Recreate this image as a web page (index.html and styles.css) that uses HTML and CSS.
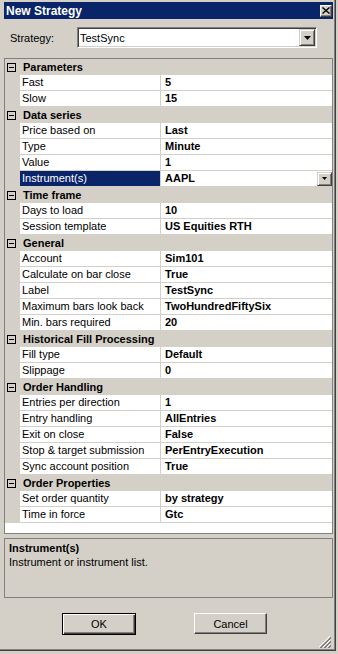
FILE: index.html
```html
<!DOCTYPE html>
<html lang="en">
<head>
    <meta charset="UTF-8">
    <meta name="viewport" content="width=device-width, initial-scale=1.0">
    <title>New Strategy</title>
    <link rel="stylesheet" href="styles.css">
</head>
<body>
    <div class="window">
        <div class="titlebar">
            <span class="title">New Strategy</span>
            <span class="close-btn">
                <svg width="8" height="7" viewBox="0 0 8 7"><path d="M0.5 0.5 L7.5 6.5 M7.5 0.5 L0.5 6.5" stroke="#000" stroke-width="1.4" fill="none"/></svg>
            </span>
        </div>

        <div class="strategy-row">
            <label class="strategy-label">Strategy:</label>
            <div class="combo">
                <span class="combo-text">TestSync</span>
                <span class="combo-btn">
                    <svg width="7" height="4" viewBox="0 0 7 4"><path d="M0 0 H7 L3.5 4 Z" fill="#000"/></svg>
                </span>
            </div>
        </div>

        <div class="prop-grid">
            <div class="category"><span class="toggle"></span>Parameters</div>
            <div class="prop"><span class="gutter"></span><span class="name">Fast</span><span class="value">5</span></div>
            <div class="prop"><span class="gutter"></span><span class="name">Slow</span><span class="value">15</span></div>

            <div class="category"><span class="toggle"></span>Data series</div>
            <div class="prop"><span class="gutter"></span><span class="name">Price based on</span><span class="value">Last</span></div>
            <div class="prop"><span class="gutter"></span><span class="name">Type</span><span class="value">Minute</span></div>
            <div class="prop"><span class="gutter"></span><span class="name">Value</span><span class="value">1</span></div>
            <div class="prop selected">
                <span class="gutter"></span><span class="name">Instrument(s)</span>
                <span class="value">AAPL
                    <span class="cell-btn">
                        <svg width="5" height="3" viewBox="0 0 5 3"><path d="M0 0 H5 L2.5 3 Z" fill="#000"/></svg>
                    </span>
                </span>
            </div>

            <div class="category"><span class="toggle"></span>Time frame</div>
            <div class="prop"><span class="gutter"></span><span class="name">Days to load</span><span class="value">10</span></div>
            <div class="prop"><span class="gutter"></span><span class="name">Session template</span><span class="value">US Equities RTH</span></div>

            <div class="category"><span class="toggle"></span>General</div>
            <div class="prop"><span class="gutter"></span><span class="name">Account</span><span class="value">Sim101</span></div>
            <div class="prop"><span class="gutter"></span><span class="name">Calculate on bar close</span><span class="value">True</span></div>
            <div class="prop"><span class="gutter"></span><span class="name">Label</span><span class="value">TestSync</span></div>
            <div class="prop"><span class="gutter"></span><span class="name">Maximum bars look back</span><span class="value">TwoHundredFiftySix</span></div>
            <div class="prop"><span class="gutter"></span><span class="name">Min. bars required</span><span class="value">20</span></div>

            <div class="category"><span class="toggle"></span>Historical Fill Processing</div>
            <div class="prop"><span class="gutter"></span><span class="name">Fill type</span><span class="value">Default</span></div>
            <div class="prop"><span class="gutter"></span><span class="name">Slippage</span><span class="value">0</span></div>

            <div class="category"><span class="toggle"></span>Order Handling</div>
            <div class="prop"><span class="gutter"></span><span class="name">Entries per direction</span><span class="value">1</span></div>
            <div class="prop"><span class="gutter"></span><span class="name">Entry handling</span><span class="value">AllEntries</span></div>
            <div class="prop"><span class="gutter"></span><span class="name">Exit on close</span><span class="value">False</span></div>
            <div class="prop"><span class="gutter"></span><span class="name">Stop &amp; target submission</span><span class="value">PerEntryExecution</span></div>
            <div class="prop"><span class="gutter"></span><span class="name">Sync account position</span><span class="value">True</span></div>

            <div class="category"><span class="toggle"></span>Order Properties</div>
            <div class="prop"><span class="gutter"></span><span class="name">Set order quantity</span><span class="value">by strategy</span></div>
            <div class="prop"><span class="gutter"></span><span class="name">Time in force</span><span class="value">Gtc</span></div>
        </div>

        <div class="description">
            <div class="desc-title">Instrument(s)</div>
            <div class="desc-text">Instrument or instrument list.</div>
        </div>

        <div class="buttons">
            <button class="btn default">OK</button>
            <button class="btn">Cancel</button>
        </div>

        <!-- size grip in the corner -->
        <div class="grip">
            <svg width="12" height="12" viewBox="0 0 12 12">
                <path d="M11 0 L0 11 M11 4 L4 11 M11 8 L8 11" stroke="#fff" stroke-width="1" fill="none"/>
                <path d="M12 1 L1 12 M12 2 L2 12 M12 5 L5 12 M12 6 L6 12 M12 9 L9 12 M12 10 L10 12" stroke="#808080" stroke-width="1" fill="none"/>
            </svg>
        </div>
    </div>
</body>
</html>
```

FILE: styles.css
```css
:root {
    --face: #d4d0c8;
    --shadow: #808080;
    --dark: #404040;
    --highlight: #ffffff;
    --select: #0a246a;
}

* {
    box-sizing: border-box;
}

body {
    margin: 0;
    background: var(--face);
    color: #000;
    font-family: 'Liberation Sans', Arial, sans-serif;
    font-size: 11px;
}

.window {
    position: relative;
    width: 336px;
    height: 651px;
    padding: 2px 2px 0 4px;
    border-right: 1px solid var(--dark);
    border-bottom: 1px solid var(--dark);
    box-shadow: inset -1px -1px var(--shadow);
}

/* title bar */
.titlebar {
    height: 17px;
    background: var(--select);
    color: #fff;
    display: flex;
    align-items: center;
    justify-content: space-between;
    padding: 0 1px 0 2px;
}

.title {
    font-weight: bold;
    font-size: 12px;
}

.close-btn {
    width: 12px;
    height: 12px;
    background: var(--face);
    border: 1px solid;
    border-color: var(--highlight) var(--dark) var(--dark) var(--highlight);
    box-shadow: inset -1px -1px var(--shadow);
    display: flex;
    align-items: center;
    justify-content: center;
}

/* strategy selector */
.strategy-row {
    display: flex;
    align-items: center;
    margin-top: 8px;
    padding-left: 6px;
    height: 21px;
}

.strategy-label {
    width: 67px;
}

.combo {
    width: 240px;
    height: 21px;
    background: #fff;
    border: 1px solid;
    border-color: var(--shadow) var(--highlight) var(--highlight) var(--shadow);
    box-shadow: inset 1px 1px var(--dark), inset -1px -1px var(--face);
    display: flex;
    align-items: center;
    padding-left: 2px;
}

.combo-btn {
    margin-left: auto;
    margin-right: 1px;
    width: 16px;
    height: 17px;
    background: var(--face);
    border: 1px solid;
    border-color: var(--face) var(--dark) var(--dark) var(--face);
    box-shadow: inset 1px 1px var(--highlight), inset -1px -1px var(--shadow);
    display: flex;
    align-items: center;
    justify-content: center;
}

/* property grid */
.prop-grid {
    margin-top: 10px;
    height: 476px;
    border: 1px solid var(--shadow);
    background: #fff;
}

.category {
    display: flex;
    align-items: center;
    height: 16px;
    background: var(--face);
    font-weight: bold;
    padding-left: 2px;
    white-space: nowrap;
    overflow: hidden;
}

.toggle {
    position: relative;
    width: 9px;
    height: 9px;
    border: 1px solid #000;
    margin-right: 7px;
    flex-shrink: 0;
}

.toggle::after {
    content: "";
    position: absolute;
    left: 1px;
    top: 3px;
    width: 5px;
    height: 1px;
    background: #000;
}

.prop {
    display: grid;
    grid-template-columns: 15px 141px 1fr;
    height: 16px;
}

.gutter {
    background: var(--face);
}

.name {
    border-right: 1px solid var(--face);
    border-bottom: 1px solid var(--face);
    padding-left: 2px;
    line-height: 15px;
    white-space: nowrap;
    overflow: hidden;
}

.value {
    border-bottom: 1px solid var(--face);
    padding-left: 4px;
    font-weight: bold;
    line-height: 15px;
    display: flex;
    align-items: center;
    white-space: nowrap;
}

.prop.selected .name {
    background: var(--select);
    color: #fff;
}

.cell-btn {
    margin-left: auto;
    width: 15px;
    height: 14px;
    background: var(--face);
    border: 1px solid;
    border-color: var(--face) var(--dark) var(--dark) var(--face);
    box-shadow: inset 1px 1px var(--highlight), inset -1px -1px var(--shadow);
    display: flex;
    align-items: center;
    justify-content: center;
}

/* help text */
.description {
    margin-top: 4px;
    height: 60px;
    border: 1px solid var(--shadow);
    padding: 2px 4px;
    line-height: 14px;
}

.desc-title {
    font-weight: bold;
}

/* dialog buttons */
.buttons {
    display: flex;
    align-items: flex-start;
    gap: 58px;
    margin-top: 15px;
    padding-left: 58px;
}

.btn {
    width: 73px;
    height: 21px;
    padding: 0;
    font-family: 'Liberation Sans', Arial, sans-serif;
    font-size: 11px;
    color: #000;
    background: var(--face);
    border: 1px solid;
    border-color: var(--highlight) var(--dark) var(--dark) var(--highlight);
    box-shadow: inset -1px -1px var(--shadow);
}

.btn.default {
    width: 74px;
    height: 22px;
    border-color: #000;
    box-shadow: inset 1px 1px var(--highlight), inset -1px -1px var(--dark), inset -2px -2px var(--shadow);
}

.grip {
    position: absolute;
    right: 4px;
    bottom: 2px;
    width: 12px;
    height: 12px;
    display: flex;
}
```
